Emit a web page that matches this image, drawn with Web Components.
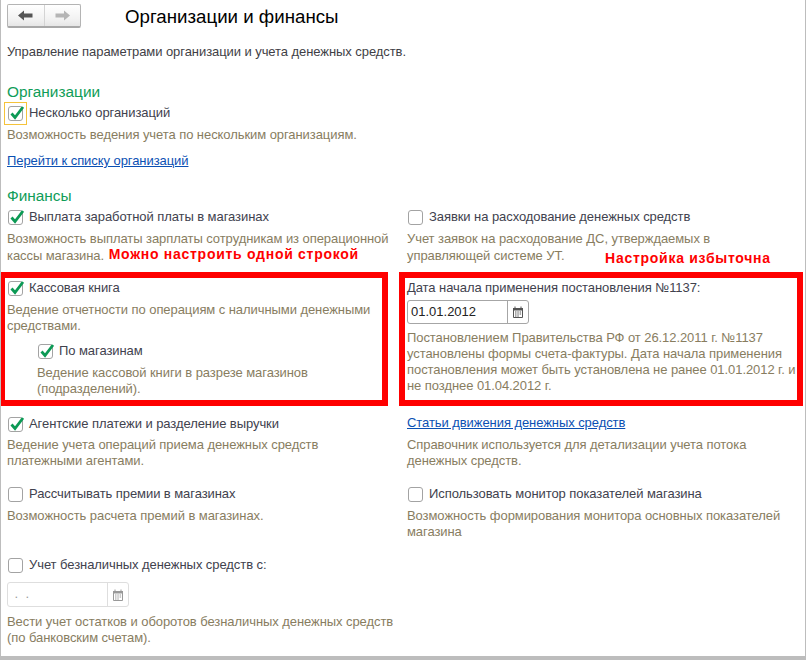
<!DOCTYPE html>
<html lang="ru">
<head>
<meta charset="utf-8">
<title>Организации и финансы</title>
<style>
  html, body { margin: 0; padding: 0; background: #fff; }
  body { font: 13px/16px "Liberation Sans", Arial, sans-serif; letter-spacing: -.07px; }
</style>
</head>
<body>
<settings-frame>
  <nav-buttons slot="nav"></nav-buttons>
  <span slot="title">Организации и финансы</span>
  <span slot="lead">Управление параметрами организации и учета денежных средств.</span>

  <section-title>Организации</section-title>
  <setting-item checked focused>Несколько организаций
    <span slot="desc">Возможность ведения учета по нескольким организациям.</span>
  </setting-item>
  <link-text style="margin-top:10px">Перейти к списку организаций</link-text>

  <section-title style="margin-top:17px">Финансы</section-title>
  <two-cols>
    <setting-item checked>Выплата заработной платы в магазинах
      <div slot="desc">Возможность выплаты зарплаты сотрудникам из операционной</div>
      <div slot="desc">кассы магазина.<red-note style="top:-1px">Можно настроить одной строкой</red-note></div>
    </setting-item>
    <setting-item>Заявки на расходование денежных средств
      <div slot="desc">Учет заявок на расходование ДС, утверждаемых в</div>
      <div slot="desc">управляющей системе УТ.<red-note style="top:3px;margin-left:36px">Настройка избыточна</red-note></div>
    </setting-item>

    <red-box side="left">
      <setting-item checked style="margin-top:-1px">Кассовая книга
        <span slot="desc">Ведение отчетности по операциям с наличными денежными средствами.</span>
      </setting-item>
      <setting-item checked style="margin:6px 0 0 30px">По магазинам
        <span slot="desc">Ведение кассовой книги в разрезе магазинов (подразделений).</span>
      </setting-item>
    </red-box>
    <red-box side="right">
      <field-label>Дата начала применения постановления №1137:</field-label>
      <date-field value="01.01.2012" style="margin-top:4px"></date-field>
      <hint-text style="margin-top:6px">Постановлением Правительства РФ от 26.12.2011 г. №1137 установлены формы счета-фактуры. Дата начала применения постановления может быть установлена не ранее 01.01.2012 г. и не позднее 01.04.2012 г.</hint-text>
    </red-box>

    <setting-item checked style="--desc-gap:4px">Агентские платежи и разделение выручки
      <span slot="desc">Ведение учета операций приема денежных средств платежными агентами.</span>
    </setting-item>
    <div>
      <link-text style="margin-top:2px">Статьи движения денежных средств</link-text>
      <hint-text style="margin-top:6px">Справочник используется для детализации учета потока денежных средств.</hint-text>
    </div>

    <setting-item>Рассчитывать премии в магазинах
      <span slot="desc">Возможность расчета премий в магазинах.</span>
    </setting-item>
    <setting-item>Использовать монитор показателей магазина
      <span slot="desc">Возможность формирования монитора основных показателей магазина</span>
    </setting-item>

    <div>
      <setting-item>Учет безналичных денежных средств с:</setting-item>
      <date-field value=" .  ." disabled style="margin-top:8px"></date-field>
      <hint-text style="margin-top:7px">Вести учет остатков и оборотов безналичных денежных средств (по банковским счетам).</hint-text>
    </div>
  </two-cols>
</settings-frame>

<script>
// Small helper: most elements below are just a template plus a shadow root.
function defineElement(name, html, hooks = {}) {
  const tpl = document.createElement('template');
  tpl.innerHTML = html;
  class Element extends HTMLElement {
    constructor() {
      super();
      this.attachShadow({ mode: 'open' }).appendChild(tpl.content.cloneNode(true));
    }
  }
  Object.assign(Element.prototype, hooks);
  customElements.define(name, Element);
}

const CHECK_PATH = 'M3.500 9.500 L7 13.500 L15 3';
const CALENDAR = `<svg width="12" height="12" viewBox="0 0 12 12" aria-hidden="true">
  <path d="M1 2h10v2.500H1z" fill="currentColor"/>
  <path d="M3 .5v2M9 .5v2" stroke="currentColor"/>
  <path d="M1.500 2.500v9h9v-9" fill="none" stroke="currentColor"/>
  <path d="M3 6h1.500M5.300 6h1.500M7.600 6h1.500M3 8h1.500M5.300 8h1.500M7.600 8h1.500M3 10h1.500M5.300 10h1.500" stroke="currentColor" stroke-width="1.100"/>
</svg>`;

defineElement('settings-frame', `
  <style>
    :host { display: block; box-sizing: border-box; width: 806px; height: 660px; overflow: hidden;
            background: #fff; border-left: 1px solid #bdbdbd; border-right: 1px solid #bdbdbd;
            border-bottom: 4px solid #bdbdbd; padding: 4px 0 0 6px; }
    header { display: flex; height: 24px; align-items: center; }
    .title { margin-left: 44px; font-size: 18.700px; letter-spacing: 0; color: #000; position: relative; top: 1px; }
    .lead { margin-top: 16px; color: #3f3f46; height: 16px; }
    main { display: block; margin-top: 22px; }
  </style>
  <header><slot name="nav"></slot><div class="title"><slot name="title"></slot></div></header>
  <div class="lead"><slot name="lead"></slot></div>
  <main><slot></slot></main>`);

defineElement('nav-buttons', `
  <style>
    :host { display: flex; width: 74px; height: 24px; box-sizing: border-box;
            border: 1px solid #b4b4b4; border-bottom: 2px solid #a8a8a8; border-radius: 2px;
            background: linear-gradient(#fff, #f1f1f1 70%, #e6e6e6); }
    div { flex: 1; display: flex; align-items: center; justify-content: center; }
    div + div { border-left: 1px solid #d4d4d4; }
  </style>
  <div><svg width="15" height="11" viewBox="0 0 15 11"><path d="M0 5.500 6 .5v3h8.500v4H6v3z" fill="#555"/></svg></div>
  <div><svg width="15" height="11" viewBox="0 0 15 11"><path d="M15 5.500 9 .5v3H.5v4H9v3z" fill="#b5b5b5"/></svg></div>`);

defineElement('section-title', `
  <style>:host { display: block; font-size: 15.400px; letter-spacing: 0; line-height: 20px; color: #0f9d58; height: 20px; }</style>
  <slot></slot>`);

defineElement('setting-item', `
  <style>
    :host { display: block; }
    .row { display: flex; align-items: center; box-sizing: border-box; height: 20px; padding-top: 2px; color: #41424e; }
    .box { position: relative; box-sizing: border-box; width: 15px; height: 15px; flex: none;
           margin: 0 6px 0 1px; border: 1px solid #a3a3a3; border-radius: 3px; background: #fff; }
    svg { position: absolute; left: -1px; top: -3px; display: none; }
    :host([checked]) svg { display: block; }
    :host([focused]) .box::after { content: ""; position: absolute; left: -5px; top: -5px; width: 21px; height: 21px;
           border: 1px solid #f5c33b; }
    .desc { margin-top: var(--desc-gap, 5px); color: #887d5f; }
  </style>
  <div class="row">
    <span class="box"><svg width="17" height="16" viewBox="0 0 17 16"><path d="${CHECK_PATH}" fill="none" stroke="#0c9a55" stroke-width="2.800"/></svg></span>
    <span class="label"><slot></slot></span>
  </div>
  <div class="desc"><slot name="desc"></slot></div>`);

defineElement('red-note', `
  <style>
    :host { position: relative; font-weight: bold; font-size: 14px; color: #f00; letter-spacing: .72px; white-space: nowrap; }
  </style>
  <slot></slot>`);

defineElement('red-box', `
  <style>
    :host { display: block; box-sizing: border-box; height: 134px; border: 6px solid #f00; padding-left: 2px; }
    :host([side="left"]) { width: 388px; margin-left: -7px; border-left-width: 5px; }
    :host([side="right"]) { width: 404px; margin-left: -8px; }
  </style>
  <slot></slot>`);

defineElement('link-text', `
  <style>:host { display: block; color: #0b50b3; text-decoration: underline; }</style>
  <slot></slot>`);

defineElement('field-label', `
  <style>:host { display: block; color: #41424e; padding-top: 2px; }</style>
  <slot></slot>`);

defineElement('hint-text', `
  <style>:host { display: block; color: #887d5f; }</style>
  <slot></slot>`);

defineElement('date-field', `
  <style>
    :host { display: flex; width: 122px; height: 24px; box-sizing: border-box;
            border: 1px solid #a6a6a6; border-radius: 3px; background: #fff; color: #222; letter-spacing: 0; }
    :host([disabled]) { height: 25px; border-color: #dedede; color: #9a9a9a; }
    .text { flex: 1; padding: 3px 0 0 3px; white-space: pre; }
    .btn { width: 20px; display: flex; align-items: center; justify-content: center;
           border-left: 1px solid #a6a6a6; color: #555; }
    :host([disabled]) .btn { border-color: #dedede; color: #999; }
  </style>
  <div class="text"></div><div class="btn">${CALENDAR}</div>`, {
  connectedCallback() {
    this.shadowRoot.querySelector('.text').textContent = this.getAttribute('value');
  },
});

defineElement('two-cols', `
  <style>
    :host { display: grid; grid-template-columns: 390px 390px; column-gap: 10px;
            grid-template-rows: 66px 141px 70px 71px auto; }
  </style>
  <slot></slot>`);
</script>
</body>
</html>
